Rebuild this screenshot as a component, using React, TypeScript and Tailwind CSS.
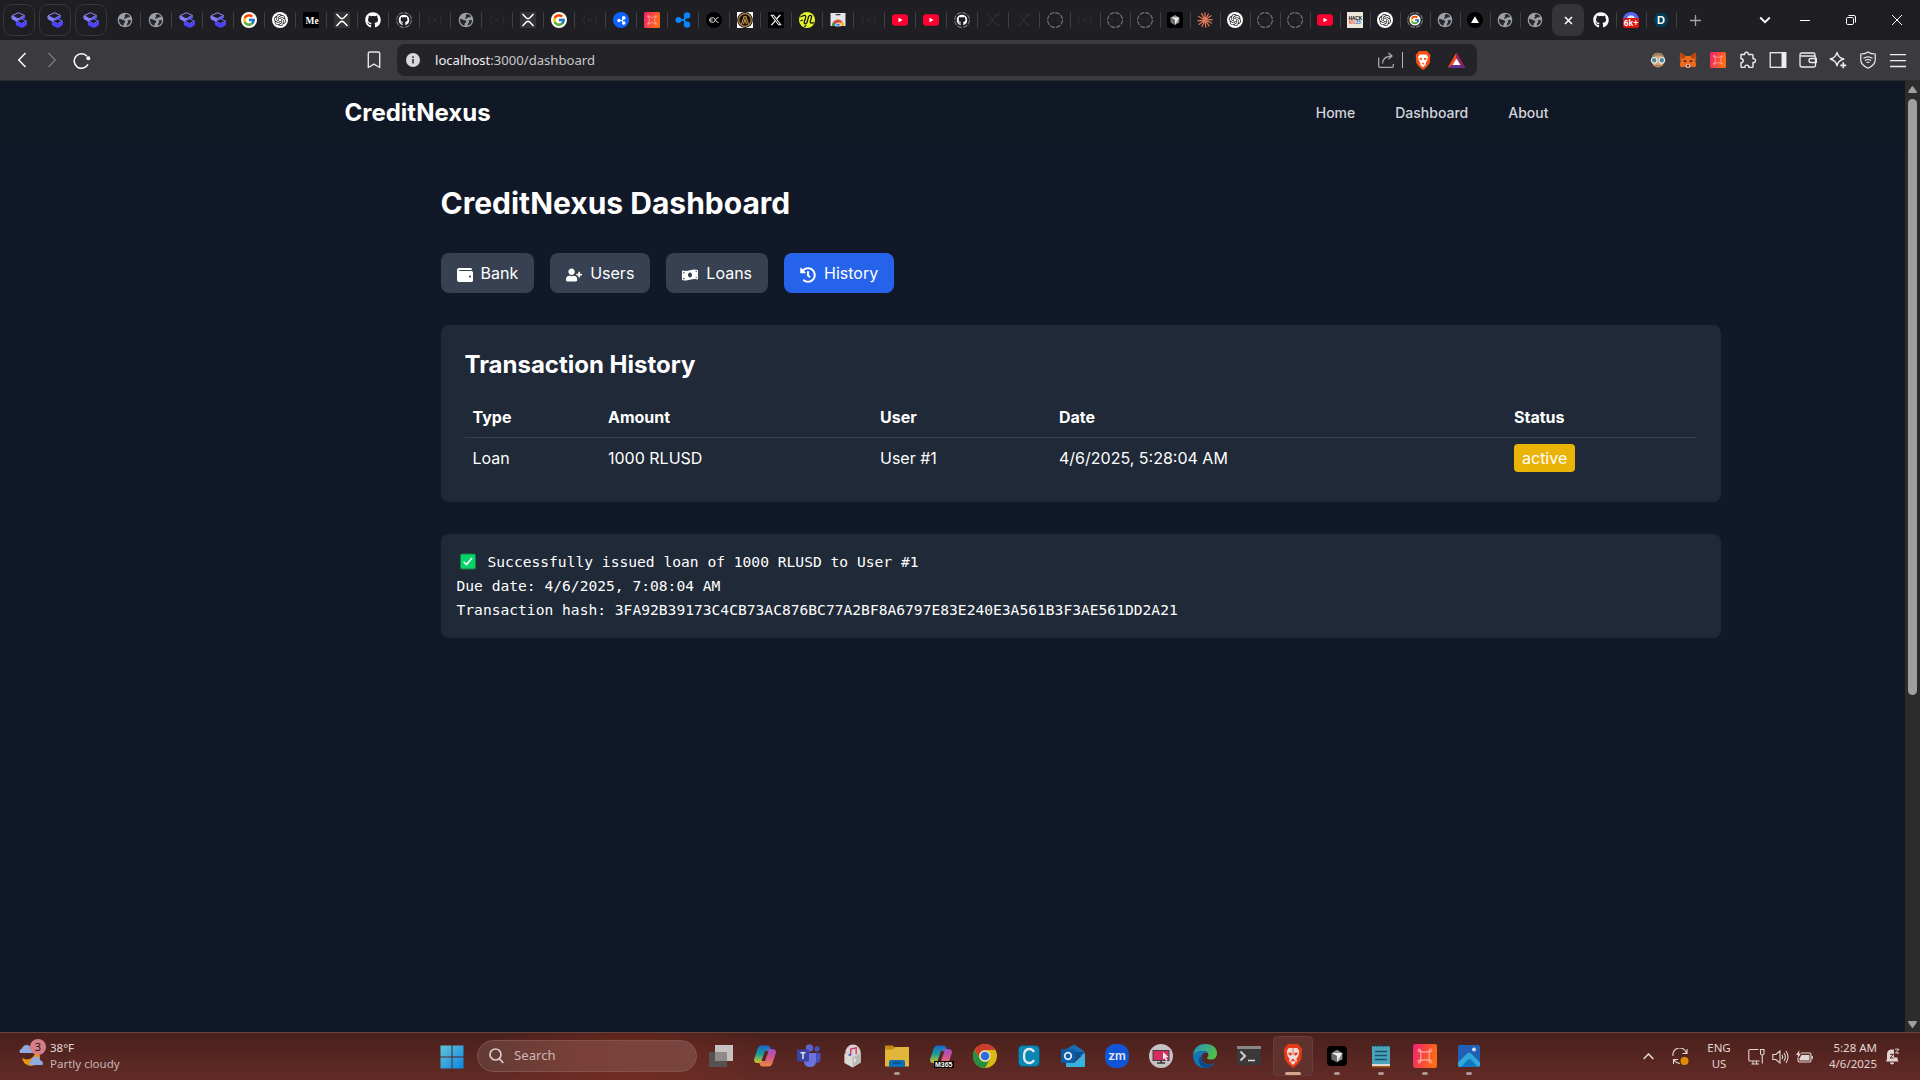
import React from 'react';
import { FcGoogle } from 'react-icons/fc';
import { FaGithub, FaHistory, FaMoneyBillWave, FaUserPlus, FaWallet } from 'react-icons/fa';
import { FaXTwitter } from 'react-icons/fa6';
import { SiOpenai } from 'react-icons/si';

interface Transaction {
  id: number;
  type: string;
  amount: string;
  user: string;
  date: string;
  status: string;
}

type FaviconName =
  | 'layers' | 'globe' | 'google' | 'openai' | 'medium' | 'xrpl' | 'github' | 'githubLoading'
  | 'braces' | 'ripple' | 'drone' | 'rippleMark' | 'evm' | 'ring' | 'twitter' | 'lime' | 'store'
  | 'youtube' | 'ribbon' | 'loading' | 'cursor' | 'claude' | 'hack' | 'googleLoading' | 'vercel'
  | 'discord' | 'devpost';

/* ---------- Tab favicons ---------- */

const Layers = () => (
  <svg width="16" height="16" viewBox="0 0 16 16">
    <path d="M7.500 .7 13.500 3.500 7 6.800 1 3.700Z" fill="#1f1e23" stroke="#8d89ff" strokeWidth="1" strokeLinejoin="round" />
    <path d="M.4 3.800 7 7v3.200L2 8Q.4 7.200.4 5.800Z" fill="#8480f8" />
    <path d="M7 7 14 3.700v2L11 7.200 7 9.800Z" fill="#5d57f5" />
    <path d="m10.500 6.800 5 2.300-5 2.500-5-2.300Z" fill="#1f1e23" stroke="#716cff" strokeWidth="1" strokeLinejoin="round" />
    <path d="m4.800 9.300 5.700 2.500L16 9.200v2.800q0 1.200-1.200 1.800l-2.800 1.700q-1.200.6-2.400 0L6 13.800Q4.800 13 4.800 12Z" fill="#4b43ff" />
  </svg>
);

const Globe = () => (
  <svg width="16" height="16" viewBox="0 0 16 16">
    <circle cx="8" cy="8" r="7.300" fill="#9aa0a6" />
    <g fill="#26262b">
      <path d="M9.200 2Q7 3 8.300 4.700 6.500 5 7.300 6.700 9.500 6.500 10.300 5.200 12.500 5.600 13.200 4.200 11.500 2.200 9.200 2Z" />
      <path d="M1.900 7.200Q4 6.800 5.500 8 8 7.800 8.300 9.800 8 11 6.800 11.200L6.500 13.800Q2 12.500 1.900 7.200Z" />
      <path d="M14 8.200Q11.500 7.500 10.500 8.800 12 10.500 10.300 11 9.800 12 9.800 13.700 14 12.200 14 8.200Z" />
    </g>
  </svg>
);

const GoogleDisc = () => (
  <span className="flex size-4 items-center justify-center rounded-full bg-white">
    <FcGoogle size={14} />
  </span>
);

const OpenAiDisc = () => (
  <span className="flex size-4 items-center justify-center rounded-full bg-white text-[#222]">
    <SiOpenai size={12} />
  </span>
);

const LoadingRing = ({ children }: { children?: React.ReactNode }) => (
  <svg width="16" height="16" viewBox="0 0 16 16">
    <circle cx="8" cy="8" r="7.400" fill="none" stroke="#77777b" strokeWidth="1.100" strokeDasharray="4.650 1.160" />
    {children}
  </svg>
);

const Braces = () => (
  <svg width="16" height="16" viewBox="0 0 16 16" fill="none" stroke="#2c3134" strokeWidth="1">
    <path d="M4 3Q2.300 3 2.300 5t-1.500 3q1.500 1 1.500 3T4 13M12 3q1.700 0 1.700 2t1.500 3q-1.500 1-1.500 3T12 13M5.300 5.500l5 5M10.300 5.500l-5 5" />
  </svg>
);

const RippleShape = ({ fill, size }: { fill: string; size: number }) => (
  <svg width={size} height={size} viewBox="0 0 16 16">
    <path d="M4 8h5l2.500-4M9 8l2.500 4" stroke={fill} strokeWidth="2" fill="none" />
    <circle cx="3.500" cy="8" r="3" fill={fill} />
    <circle cx="12" cy="3.400" r="3.200" fill={fill} />
    <circle cx="12" cy="12.600" r="3.200" fill={fill} />
  </svg>
);

const Drone = ({ size }: { size: number }) => (
  <svg width={size} height={size} viewBox="0 0 16 16">
    <defs>
      <linearGradient id="droneFill" x1="0" y1="0" x2="1" y2="0.300">
        <stop offset="0" stopColor="#ee1f72" />
        <stop offset="1" stopColor="#ff6a14" />
      </linearGradient>
    </defs>
    <rect width="16" height="16" rx="1.500" fill="url(#droneFill)" />
    <path d="M4.600 4.600Q8 6.200 11.400 4.600 9.800 8 11.400 11.400 8 9.800 4.600 11.400 6.200 8 4.600 4.600Z" fill="none" stroke="#ffb3a8" strokeWidth=".7" />
    <g fill="none" stroke="#ffb3a8" strokeWidth=".6">
      <circle cx="4.200" cy="4.200" r=".9" />
      <circle cx="11.800" cy="4.200" r=".9" />
      <circle cx="4.200" cy="11.800" r=".9" />
      <circle cx="11.800" cy="11.800" r=".9" />
    </g>
  </svg>
);

const CursorCube = ({ size }: { size: number }) => (
  <svg width={size} height={size} viewBox="0 0 16 16">
    <rect width="16" height="16" rx="3" fill="#000" />
    <path d="m8 3 4.300 2.500v5L8 13l-4.300-2.500v-5Z" fill="#8c8c8c" />
    <path d="M3.700 5.500h8.600L8 12.800V8Z" fill="#ececec" />
    <path d="M3.700 5.500 8 8v5l-4.300-2.500Z" fill="#6d6d6d" />
  </svg>
);

const Youtube = () => (
  <svg width="16" height="16" viewBox="0 0 16 16">
    <rect y="2.300" width="16" height="11.400" rx="3" fill="#ff0033" />
    <path d="M6.500 5.700v4.600l4-2.300Z" fill="#fff" />
  </svg>
);

const Favicon = ({ name }: { name: FaviconName }) => {
  switch (name) {
    case 'layers':
      return <Layers />;
    case 'globe':
      return <Globe />;
    case 'google':
      return <GoogleDisc />;
    case 'openai':
      return <OpenAiDisc />;
    case 'medium':
      return (
        <svg className="overflow-visible" width="16" height="16" viewBox="0 0 16 16">
          <rect width="16" height="16" rx="2" fill="#000" />
          <text x="2.500" y="11.500" fill="#fff" fontSize="9.500" fontWeight="700" fontFamily="Liberation Serif">
            Me
          </text>
        </svg>
      );
    case 'xrpl':
      return (
        <svg width="16" height="16" viewBox="0 0 16 16">
          <rect width="16" height="16" fill="#333" />
          <path d="M2.500 2 6 5.700q2 1.800 4 0L13.500 2M2.500 14 6 10.300q2-1.800 4 0l3.500 3.700" stroke="#fff" strokeWidth="1.500" fill="none" />
        </svg>
      );
    case 'github':
      return <FaGithub size={16} className="text-white" />;
    case 'githubLoading':
      return (
        <LoadingRing>
          <FaGithub x="2.500" y="2.500" size={11} className="text-white" />
        </LoadingRing>
      );
    case 'googleLoading':
      return (
        <LoadingRing>
          <circle cx="8" cy="8" r="5.600" fill="#fff" />
          <FcGoogle x="3" y="3" size={10} />
        </LoadingRing>
      );
    case 'braces':
      return <Braces />;
    case 'ripple':
      return (
        <span className="flex size-4 items-center justify-center rounded-full bg-[#0f62fe]">
          <RippleShape fill="#fff" size={9} />
        </span>
      );
    case 'rippleMark':
      return <RippleShape fill="#0a84ff" size={16} />;
    case 'drone':
      return <Drone size={16} />;
    case 'evm':
      return (
        <svg width="16" height="16" viewBox="0 0 16 16">
          <circle cx="8" cy="8" r="8" fill="#000" />
          <path d="M7.500 5.800Q3.500 5 3.500 8t4 2.200M3.500 8h3M12.500 5.500Q10.500 5.500 9.300 8 8.500 10.300 7.500 10.200M7.500 5.800Q8.500 5.800 9.300 8q1.200 2.500 3.200 2.500" stroke="#ddd" fill="none" />
        </svg>
      );
    case 'ring':
      return (
        <svg width="16" height="16" viewBox="0 0 16 16">
          <rect width="16" height="16" fill="#fff" />
          <circle cx="8" cy="8" r="7.900" fill="#15110c" />
          <circle cx="8" cy="8" r="6.300" fill="none" stroke="#b98a4a" strokeWidth="1.200" />
          <path d="M4.500 12.500 7 4.500h2l2.500 8M6.500 12l1.500-5 1.500 5" fill="none" stroke="#b98a4a" strokeWidth="1.100" />
        </svg>
      );
    case 'twitter':
      return (
        <svg width="16" height="16" viewBox="0 0 16 16">
          <rect width="16" height="16" fill="#000" />
          <FaXTwitter x="1.500" y="1.500" size={13} className="text-[#e8e8e8]" />
        </svg>
      );
    case 'lime':
      return (
        <svg width="16" height="16" viewBox="0 0 16 16">
          <circle cx="8" cy="8" r="8" fill="#e6f72b" />
          <path d="M1.500 5 5 3.500q2.200-.3 1.700 2L5.300 10q-.4 2 1.200 1.800 1.300-.3 1.700-2L9.500 5q.7-2 2-1.600 1.500.3 1 2L11.300 9.500q-.3 1.700 1 1.600l2.500-.6M1.500 9l2.500-1M5 14.500l2.500-1" stroke="#15160a" strokeWidth="1.300" fill="none" />
        </svg>
      );
    case 'store':
      return (
        <svg width="16" height="16" viewBox="0 0 16 16">
          <path d="M.5 1h15v13h-15Z" fill="#e4e6e8" />
          <rect x="5.500" y="2" width="5" height="1.300" rx=".6" fill="#444" />
          <path d="M2 14a6 6.500 0 0 1 12 0Z" fill="#e0453a" />
          <path d="M2 14q0-2.500 1.300-4.200L6 14Z" fill="#2da350" />
          <path d="M14 14q0-2.500-1-3.800H8.500L11 14Z" fill="#f9c22d" />
          <path d="M5.200 14a2.800 2.800 0 0 1 5.600 0Z" fill="#3f7fec" stroke="#fff" strokeWidth=".7" />
        </svg>
      );
    case 'youtube':
      return <Youtube />;
    case 'ribbon':
      return (
        <svg width="16" height="16" viewBox="0 0 16 16" fill="none" stroke="#273236" strokeWidth="1.200">
          <path d="M1 2q2 0 4 3l5 6q2 2.500 5 2.800M15 1.500q-3 .5-5.500 4L6 10.500Q3.500 14 1 13M10 3.500q2.500-2 4.500-.500" />
        </svg>
      );
    case 'loading':
      return (
        <LoadingRing>
          <path d="M5.500 5.500q-1 1-.5 2.500-.5 1.500.5 2.500M10.500 5.500q1 1 .5 2.500.5 1.500-.5 2.500" stroke="#2a2e33" fill="none" />
        </LoadingRing>
      );
    case 'cursor':
      return <CursorCube size={16} />;
    case 'claude':
      return (
        <svg width="16" height="16" viewBox="0 0 16 16" stroke="#d97757" strokeWidth="1.300" strokeLinecap="round">
          <path d="M8 8V.8M8 8l3.400-6M8 8l6-4.200M8 8l7.200-.3M8 8l6.600 3M8 8l4.200 5.800M8 8l.8 7.200M8 8l-3 6.500M8 8l-5.800 4.300M8 8l-7.200.8M8 8 1.600 4.500M8 8 4.600 1.600" />
        </svg>
      );
    case 'hack':
      return (
        <svg className="overflow-visible" width="16" height="16" viewBox="0 0 16 16" fontFamily="Liberation Sans" fontWeight="700" fontSize="4.600">
          <rect width="16" height="16" fill="#ece8da" />
          <text x="1.700" y="7.500" fill="#000">
            HACK
          </text>
          <text x="2" y="11.800" fill="#e2453c">
            KU
          </text>
          <text x="8.700" y="11.800" fill="#2477c9">
            25
          </text>
        </svg>
      );
    case 'vercel':
      return (
        <svg width="16" height="16" viewBox="0 0 16 16">
          <circle cx="8" cy="8" r="8" fill="#000" />
          <path d="M8 4.200 12 11H4Z" fill="#fff" />
        </svg>
      );
    case 'discord':
      return (
        <svg width="16" height="16" viewBox="0 0 16 16">
          <circle cx="8" cy="8" r="8" fill="#5865f2" />
          <path d="M4 6.500Q4.500 3.800 6.500 3.500h3q2 .3 2.500 3Z" fill="#dfe2ff" />
          <rect y="6" width="16" height="10" rx="2.500" fill="#e0130f" />
          <text x="8" y="14" textAnchor="middle" fill="#fff" fontSize="8.500" fontWeight="700" fontFamily="Liberation Sans" textLength="14.500" lengthAdjust="spacingAndGlyphs">
            6k+
          </text>
        </svg>
      );
    case 'devpost':
      return (
        <svg width="16" height="16" viewBox="0 0 16 16">
          <path d="M4 1h8l4 7-4 7H4L0 8Z" fill="#003e54" />
          <text x="8" y="12" textAnchor="middle" fill="#fff" fontSize="11" fontWeight="700" fontFamily="Liberation Sans">
            D
          </text>
        </svg>
      );
  }
};

const wideTabs: FaviconName[] = [
  'globe', 'globe', 'layers', 'layers', 'google', 'openai', 'medium', 'xrpl', 'github', 'githubLoading',
  'braces', 'globe', 'braces', 'xrpl', 'google', 'braces', 'ripple', 'drone', 'rippleMark', 'evm',
  'ring', 'twitter', 'lime', 'store', 'braces', 'youtube', 'youtube', 'githubLoading', 'ribbon', 'ribbon',
  'loading',
];

const narrowTabs: FaviconName[] = [
  'braces', 'loading', 'loading', 'cursor', 'claude', 'openai', 'loading', 'loading', 'youtube',
  'hack', 'openai', 'googleLoading', 'globe', 'vercel', 'globe', 'globe',
];

const trailingTabs: FaviconName[] = ['github', 'discord', 'devpost'];

const TabDivider = () => <span className="h-4 w-px shrink-0 bg-[#3f3e43]" />;

const TabStrip = () => (
  <div className="flex h-10 shrink-0 items-center bg-[#1f1e23] pl-[3px]">
    <div className="flex gap-1">
      {[0, 1, 2].map((tab) => (
        <div key={tab} className="flex size-8 items-center justify-center rounded-[9px] border border-[#38373c]">
          <Layers />
        </div>
      ))}
    </div>
    <div className="ml-[3px] flex">
      {wideTabs.map((name, index) => (
        <div key={index} className="flex w-[31px] items-center">
          <span className="flex flex-1 justify-center">
            <Favicon name={name} />
          </span>
          <TabDivider />
        </div>
      ))}
      {narrowTabs.map((name, index) => (
        <div key={index} className="flex w-[30px] items-center justify-between pl-1.5">
          <Favicon name={name} />
          {index !== narrowTabs.length - 1 && <TabDivider />}
        </div>
      ))}
    </div>
    {/* Active tab */}
    <div className="ml-px flex size-8 items-center justify-center rounded-lg bg-[#353439]">
      <svg width="9" height="9" viewBox="0 0 9 9" stroke="#fff" strokeWidth="1.500">
        <path d="m1 1 7 7M8 1 1 8" />
      </svg>
    </div>
    <div className="ml-[3px] flex">
      {trailingTabs.map((name) => (
        <div key={name} className="flex w-[30px] items-center justify-between pl-1.5">
          <Favicon name={name} />
          <TabDivider />
        </div>
      ))}
    </div>
    <svg className="ml-[13px]" width="11" height="11" viewBox="0 0 11 11" stroke="#a5a4a8" strokeWidth="1.300">
      <path d="M5.500 0v11M0 5.500h11" />
    </svg>
    <div className="ml-auto flex items-center">
      <svg className="mr-[29px]" width="12" height="8" viewBox="0 0 12 8" stroke="#fff" strokeWidth="1.800" fill="none">
        <path d="m1.200 1.500 4.800 4.700 4.800-4.700" />
      </svg>
      <svg className="mr-9" width="10" height="10" viewBox="0 0 10 10" stroke="#fff">
        <path d="M0 5.500h10" />
      </svg>
      <svg className="mr-9" width="10" height="10" viewBox="0 0 10 10" stroke="#fff" fill="none">
        <rect x=".5" y="2.500" width="7" height="7" rx="1.200" />
        <path d="M2.500.5H8Q9.500.5 9.500 2v5.500" />
      </svg>
      <svg className="mr-[18px]" width="10" height="10" viewBox="0 0 10 10" stroke="#fff">
        <path d="m0 0 10 10M10 0 0 10" />
      </svg>
    </div>
  </div>
);

/* ---------- Address bar ---------- */

const ExtensionIcons = () => (
  <div className="flex items-center gap-3">
    {/* Face with glasses */}
    <svg width="18" height="18" viewBox="0 0 18 18">
      <ellipse cx="9" cy="9.200" rx="6.500" ry="7.300" fill="#d9a577" />
      <path d="M2.500 7Q3.500 1.700 9 1.700T15.500 7q-3-3-6.500-2.500T2.500 7Z" fill="#9a8560" />
      <circle cx="5.200" cy="9.300" r="2.800" fill="#4f8796" stroke="#e4edf0" strokeWidth="1.200" />
      <circle cx="12.800" cy="9.300" r="2.800" fill="#4f8796" stroke="#e4edf0" strokeWidth="1.200" />
      <path d="M6.500 14.500q2.500 1 5 0" stroke="#9e5a40" fill="none" />
    </svg>
    {/* Fox */}
    <svg width="18" height="18" viewBox="0 0 18 18">
      <path d="m1.500 1.500 5 3.500h5l5-3.500.8 5-1 3.500 1 3.500-1.300 3-3.500-1-2 1.500h-3l-2-1.500-3.500 1-1.300-3 1-3.500-1-3.500Z" fill="#ee6a1c" />
      <path d="m1.500 1.500 5 3.500-.8 2.500H1.200ZM16.500 1.500l-5 3.500.8 2.500h4.500Z" fill="#b5440f" />
      <path d="m5 9 2.500 1-.5 1.200-2.300-.6ZM13 9l-2.500 1 .5 1.200 2.300-.6Z" fill="#2a1f1b" />
      <path d="m7 13 2 .6 2-.600.500 2.500-1 1h-3l-1-1Z" fill="#d5bfb2" />
      <path d="M7.800 14h2.400l-.4 1.500H8.200Z" fill="#2a1f1b" />
    </svg>
    <span className="mx-px">
      <Drone size={16} />
    </span>
    {/* Puzzle */}
    <svg width="18" height="18" viewBox="0 0 18 18" stroke="#eeeef0" strokeWidth="1.400" fill="none">
      <path d="M2 3.500h3.700Q5.300 1.300 7.500 1.300T9.400 3.500H13q1 0 1 1v3.200q2.500-.4 2.500 1.800T14 11.400v4q0 1-1 1H9.800q.3-2.300-2-2.300T6 16.400H3q-1 0-1-1v-3.600q2.200-.2 2.200-2T2 7.800Z" strokeLinejoin="round" />
    </svg>
    {/* Side panel */}
    <svg width="18" height="18" viewBox="0 0 18 18">
      <rect x="1.200" y="1.700" width="15.600" height="14.600" fill="none" stroke="#eeeef0" strokeWidth="1.300" />
      <path d="M12.500 1.500h4.500v15h-4.500Z" fill="#eeeef0" />
    </svg>
    {/* Wallet */}
    <svg width="18" height="18" viewBox="0 0 18 18" fill="none" stroke="#eeeef0" strokeWidth="1.300">
      <path d="M16 5V3.500Q16 2 14.500 2H3Q1 2 1 3.800V14q0 2 2 2h12q1.500 0 1.500-1.500V6.600Q16.500 5 15 5H3Q1 5 1 3.800M17.300 7.500H12q-2 0-2 2t2 2h5.300Z" />
    </svg>
    {/* Sparkle */}
    <svg width="18" height="18" viewBox="0 0 18 18" fill="none" stroke="#eeeef0" strokeWidth="1.300">
      <path d="M8 1.300Q9 6.500 14.800 8 9 9.500 8 14.800 7 9.500 1.200 8 7 6.500 8 1.300Z" strokeLinejoin="round" />
      <path d="M14.300 11.300v6M11.300 14.300h6" strokeWidth="1.700" />
    </svg>
    {/* Shield */}
    <svg width="18" height="18" viewBox="0 0 18 18" fill="none" stroke="#eeeef0" strokeWidth="1.200">
      <path d="M9 .9q3 2.100 7.200 2.100V9q0 5-7.200 8.300Q1.800 14 1.800 9V3Q6 3 9 .9Z" />
      <path d="M4.500 7.300q4.500-3 9 0M5.900 9.500q3.100-2 6.200 0M7.500 11.600q1.500-1 3 0" />
    </svg>
    {/* Menu */}
    <svg width="18" height="18" viewBox="0 0 18 18" stroke="#eeeef0" strokeWidth="1.300">
      <path d="M1 3.600h16M1 9.600h16M1 15.500h16" />
    </svg>
  </div>
);

const AddressBar = () => (
  <div className="flex h-[41px] shrink-0 items-center border-b border-[#2c2b2f] bg-[#3b3a3e]">
    <div className="ml-[17px] flex items-center">
      <svg width="10" height="16" viewBox="0 0 10 16" stroke="#fff" strokeWidth="1.500" fill="none">
        <path d="M8.500 1 1.800 8l6.700 7" />
      </svg>
      <svg className="ml-5" width="10" height="16" viewBox="0 0 10 16" stroke="#77767a" strokeWidth="1.500" fill="none">
        <path d="m1.500 1 6.700 7-6.700 7" />
      </svg>
      <svg className="ml-4" width="18" height="17" viewBox="0 0 18 17" fill="none" stroke="#fff" strokeWidth="1.500">
        <path d="M14 4.200A7.300 7.300 0 1 0 15 12.300" />
        <circle cx="15.300" cy="6.300" r="2" fill="#fff" stroke="none" />
      </svg>
    </div>
    <svg className="ml-[276px]" width="14" height="18" viewBox="0 0 14 18" fill="none" stroke="#e6e6e8" strokeWidth="1.400">
      <path d="M1.300 2.500q0-1.500 1.500-1.500h8.400q1.500 0 1.500 1.500v14L7 13.200l-5.700 3.300Z" strokeLinejoin="round" />
    </svg>
    <div className="ml-4 flex h-8 w-[1080px] items-center rounded-lg bg-[#242328] pl-[9px] pr-[11px]">
      <svg width="14" height="14" viewBox="0 0 14 14">
        <circle cx="7" cy="7" r="7" fill="#d9d9dd" />
        <path d="M7 6v4.500M7 3.300V5" stroke="#29282d" strokeWidth="1.500" />
      </svg>
      <span className="ml-[15px] font-['Noto_Sans',sans-serif] text-[13.100px] leading-5 text-[#c9c9cd]">
        <span className="text-[#f0f0f2]">localhost</span>:3000/dashboard
      </span>
      <svg className="mr-px ml-auto" width="16" height="16" viewBox="0 0 16 16" fill="none" stroke="#a7a6ab" strokeWidth="1.300">
        <path d="M.7 5.500V14q0 1.300 1.300 1.300h12q1.300 0 1.300-1.300v-2M4.500 11.500q.3-7 9-7.500M10.500.8 14 4l-3.500 3.300" />
      </svg>
      <span className="ml-[7px] h-4 w-px bg-[#b5b4b9]" />
      <svg className="ml-3" width="16" height="19" viewBox="0 0 24 24" preserveAspectRatio="none">
        <path d="M6 0h12l5 5-1 10-4 5-6 4-6-4-4-5L1 5Z" fill="#fb4f14" />
        <path d="M7 4.500h10l2.500 3-1 4-2.500 3.500.5 2-4.500 3.500L7.500 17l.5-2-2.500-3.500-1-4Z" fill="#fff" />
        <path d="m6.800 8.500 3.700.3-.5 3-3-1ZM17.200 8.500l-3.700.3.500 3 3-1ZM10 16l2-1.500 2 1.500-2 1.500Z" fill="#fb4f14" />
      </svg>
      <svg className="ml-4" width="19" height="17" viewBox="0 0 19 17">
        <path d="M9.500.5.500 16l5-3 4-6.500Z" fill="#ff4724" />
        <path d="m9.500.5 9 15.500-5-3-4-6.500Z" fill="#9e1f63" />
        <path d="M.5 16h18l-5-3h-8Z" fill="#662d91" />
        <path d="m9.500 6.500 4 6.500h-8Z" fill="#fff" />
      </svg>
    </div>
    <div className="ml-auto mr-[13px]">
      <ExtensionIcons />
    </div>
  </div>
);

/* ---------- Page ---------- */

const navLinks = ['Home', 'Dashboard', 'About'];

const Navbar = () => (
  <nav className="bg-[#111825]">
    <div className="mx-auto flex h-16 max-w-7xl items-center justify-between px-8">
      <span className="text-2xl font-bold text-white">CreditNexus</span>
      <div className="flex space-x-4">
        {navLinks.map((link) => (
          <a key={link} href="#" className="px-3 py-2 text-sm font-medium text-[#d1d5db]">
            {link}
          </a>
        ))}
      </div>
    </div>
  </nav>
);

const sections = [
  { label: 'Bank', Icon: FaWallet, active: false },
  { label: 'Users', Icon: FaUserPlus, active: false },
  { label: 'Loans', Icon: FaMoneyBillWave, active: false },
  { label: 'History', Icon: FaHistory, active: true },
];

const transactions: Transaction[] = [
  { id: 1, type: 'Loan', amount: '1000 RLUSD', user: 'User #1', date: '4/6/2025, 5:28:04 AM', status: 'active' },
];

const TransactionHistory = () => (
  <div className="mb-8 rounded-lg bg-[#1f2937] p-6">
    <h2 className="mb-4 text-2xl font-bold">Transaction History</h2>
    <table className="w-full table-fixed border-collapse">
      <thead>
        <tr className="border-b border-[#374151] text-left">
          <th className="w-[135.500px] p-2">Type</th>
          <th className="w-[272px] p-2">Amount</th>
          <th className="w-[179px] p-2">User</th>
          <th className="w-[455px] p-2">Date</th>
          <th className="p-2">Status</th>
        </tr>
      </thead>
      <tbody>
        {transactions.map((tx) => (
          <tr key={tx.id}>
            <td className="p-2">{tx.type}</td>
            <td className="p-2">{tx.amount}</td>
            <td className="p-2">{tx.user}</td>
            <td className="p-2">{tx.date}</td>
            <td className="p-2">
              <span className="rounded bg-[#eab308] px-2 py-1">{tx.status}</span>
            </td>
          </tr>
        ))}
      </tbody>
    </table>
  </div>
);

const CheckMark = () => (
  <svg className="mr-3 mb-1 ml-[3px] inline" width="16" height="17" viewBox="0 0 17 17">
    <rect x=".5" y=".5" width="16" height="16" rx="1.500" fill="#06d36a" stroke="#14803f" />
    <path d="m3.800 8.800 3 3 6-7" fill="none" stroke="#fff" strokeWidth="1.600" />
  </svg>
);

const Dashboard = () => (
  <main className="mx-auto max-w-[1536px] pt-10 pl-64">
    <h1 className="mb-8 text-3xl font-bold">CreditNexus Dashboard</h1>
    <div className="mb-8 flex gap-4">
      {sections.map(({ label, Icon, active }) => (
        <button key={label} className={`rounded-lg px-4 py-2 ${active ? 'bg-[#2563eb]' : 'bg-[#374151]'}`}>
          <Icon className="mr-2 inline" />
          {label}
        </button>
      ))}
    </div>
    <TransactionHistory />
    <pre className="rounded-lg bg-[#1f2937] p-4 font-['DejaVu_Sans_Mono',monospace] text-[14.610px] leading-6">
      <CheckMark />
      {'Successfully issued loan of 1000 RLUSD to User #1\n'}
      {'Due date: 4/6/2025, 7:08:04 AM\n'}
      {'Transaction hash: 3FA92B39173C4CB73AC876BC77A2BF8A6797E83E240E3A561B3F3AE561DD2A21'}
    </pre>
  </main>
);

const Scrollbar = () => (
  <div className="flex w-[15px] shrink-0 flex-col items-center bg-[#2c2c2c]">
    <svg className="mt-[5px]" width="9" height="7" viewBox="0 0 9 7">
      <path d="M4.500 0Q5.200 0 9 6q0 1-1 1H1Q0 7 0 6 3.800 0 4.500 0Z" fill="#9f9f9f" />
    </svg>
    <div className="mt-[6px] h-[596px] w-[9px] rounded-full bg-[#9f9f9f]" />
    <svg className="mt-auto mb-[4px]" width="9" height="7" viewBox="0 0 9 7">
      <path d="M4.500 7Q3.800 7 0 1q0-1 1-1h7q1 0 1 1-3.800 6-4.500 6Z" fill="#9f9f9f" />
    </svg>
  </div>
);

/* ---------- Taskbar ---------- */

const Weather = () => (
  <div className="flex w-[440px] items-center pl-[18px]">
    <svg width="29" height="30" viewBox="0 0 29 30" className="mb-1.5">
      <circle cx="13" cy="18" r="9" fill="#e8940f" />
      <circle cx="9" cy="12" r="8.500" fill="#512420" />
      <path d="M2 14q-1.500-3.500 2-4.500 1.500-4 5-3.500 3 .3 3.500 3.500 3 1 2 4.500Z" fill="#8fabdf" />
      <path d="M12 26q-2-3.500 1.500-5 1.500-4 5-3.500 3 .3 3.500 3.500 4 1.500 2.500 5Z" fill="#8fabdf" />
      <circle cx="20" cy="8" r="8" fill="#d67e87" />
      <text x="20" y="12" textAnchor="middle" fontSize="11" fill="#2a1212" fontFamily="Noto Sans">
        3
      </text>
    </svg>
    <div className="ml-[3px] pb-0.5 text-[11.500px] leading-4">
      <div className="text-[#e5dad9]">38°F</div>
      <div className="text-[#c9b6b4]">Partly cloudy</div>
    </div>
  </div>
);

const Copilot = ({ id }: { id: string }) => (
  <svg width="24" height="24" viewBox="0 0 24 24">
    <defs>
      <linearGradient id={`${id}Left`} x1="0" y1="0" x2="0" y2="1">
        <stop offset="0" stopColor="#1667c9" />
        <stop offset=".5" stopColor="#1c9d9a" />
        <stop offset="1" stopColor="#d8c31c" />
      </linearGradient>
      <linearGradient id={`${id}Right`} x1="0" y1="0" x2="0" y2="1">
        <stop offset="0" stopColor="#9a4fc9" />
        <stop offset=".5" stopColor="#d6558b" />
        <stop offset="1" stopColor="#ef8a3c" />
      </linearGradient>
    </defs>
    <path d="M14.500 1.500q2 0 2.700 2l.8 2.500h-4l-2.500 9q-1 4-4 4H4.500Q1 19 1 15.500L4.500 5Q5.500 1.500 9 1.500Z" fill={`url(#${id}Left)`} />
    <path d="M9.500 22.500q-2 0-2.700-2L6 18h4l2.500-9q1-4 4-4h3q3.500 0 3.500 3.500L19.500 19q-1 3.500-4.500 3.500Z" fill={`url(#${id}Right)`} />
    <path d="M12 7h3.500L12 17H8.500Z" fill="#542522" />
  </svg>
);

const ChromeIcon = () => (
  <svg width="24" height="24" viewBox="0 0 24 24">
    <circle cx="12" cy="12" r="12" fill="#d9b913" />
    <path d="M1.600 6A12 12 0 0 1 22.400 6H12a6 6 0 0 0-5.200 9Z" fill="#cf3a2e" />
    <path d="M1.600 6A12 12 0 0 0 12 24l5.200-9a6 6 0 0 1-10.400 0Z" fill="#258f42" />
    <circle cx="12" cy="12" r="5.600" fill="#e6e6e6" />
    <circle cx="12" cy="12" r="4.300" fill="#2a6fd6" />
  </svg>
);

const BraveIcon = () => (
  <svg width="20" height="24" viewBox="0 0 24 24" preserveAspectRatio="none">
    <path d="M6 0h12l5 5-1 10-4 5-6 4-6-4-4-5L1 5Z" fill="#e63a17" />
    <path d="M7 4h10l2.500 3-1 5-2.500 3 1 2-5 4-5-4 1-2-2.500-3-1-5Z" fill="#ecdedb" />
    <path d="m6.500 8.500 4 .3-.5 3-3-1ZM17.500 8.500l-4 .3.500 3 3-1ZM10 16l2-1.500 2 1.500-2 1.500Z" fill="#e63a17" />
    <path d="M12 4v7M9 19l1-3M15 19l-1-3" stroke="#e63a17" strokeWidth=".8" />
  </svg>
);

interface TaskbarApp {
  name: string;
  state?: 'open' | 'active';
  icon: React.ReactNode;
}

const apps: TaskbarApp[] = [
  {
    name: 'taskview',
    icon: (
      <svg width="24" height="24" viewBox="0 0 24 24">
        <path d="M0 8h18v15H0Z" fill="#565252" />
        <path d="M6 1h18v16H6Z" fill="#c6c2c1" />
        <path d="M6 8h12v9H6Z" fill="#8f8b8a" />
      </svg>
    ),
  },
  { name: 'copilot', icon: <Copilot id="copilot" /> },
  {
    name: 'teams',
    icon: (
      <svg width="24" height="24" viewBox="0 0 24 24">
        <circle cx="12.500" cy="4" r="3.700" fill="#5b62cf" />
        <circle cx="20" cy="5" r="2.700" fill="#4a50bb" />
        <path d="M17 9h6.500v6q0 4-4 4H17Z" fill="#4a50bb" />
        <path d="M7 9h12v8q0 6-6 6t-6-6Z" fill="#6b72dd" />
        <rect y="5.500" width="12" height="12" rx="1" fill="#3b43a5" />
        <path d="M3.500 8.700h5M6 8.500v6.500" stroke="#e3e3f3" strokeWidth="1.500" />
      </svg>
    ),
  },
  {
    name: 'music',
    icon: (
      <svg width="20" height="24" viewBox="0 0 22 24" preserveAspectRatio="none">
        <ellipse cx="11" cy="9" rx="8.500" ry="8.500" fill="#d9d0d3" />
        <path d="M8.500 11V5l6-1.200V10" stroke="#c8385f" strokeWidth="1.500" fill="none" />
        <ellipse cx="7.500" cy="11" rx="1.600" ry="1.300" fill="#4d6fc4" />
        <path d="m1.500 9.500 3 1.500 6 2.500 6-2.800 3-1.700v9.500l-9 5-9-4.500Z" fill="#dbd9d8" />
        <path d="m10.500 13.500 9-4.500v9.500l-9 5Z" fill="#bcb9b8" />
        <path d="M13 14.500v3.500" stroke="#f3f3f3" strokeWidth="1.500" />
      </svg>
    ),
  },
  {
    name: 'explorer',
    state: 'open',
    icon: (
      <svg width="24" height="24" viewBox="0 0 24 24">
        <path d="M0 1.500h8l2 2.500v4H0Z" fill="#c18a0b" />
        <path d="M0 5.500h8L10 3h14v19.500H0Z" fill="#e2b63a" />
        <path d="M4 23v-5q0-2 2-2h12q2 0 2 2v5Z" fill="#0d6db5" />
        <path d="M8 19h8" stroke="#084d83" strokeWidth="1.500" />
      </svg>
    ),
  },
  {
    name: 'm365',
    icon: (
      <span className="relative">
        <Copilot id="m365" />
        <span className="absolute top-[17px] left-[5px] bg-black px-px font-['Liberation_Sans',sans-serif] text-[7px] font-bold leading-[7px] text-white">
          M365
        </span>
      </span>
    ),
  },
  { name: 'chrome', icon: <ChromeIcon /> },
  {
    name: 'clipchamp',
    icon: (
      <svg width="22" height="22" viewBox="0 0 22 22">
        <rect x=".5" y=".5" width="21" height="21" rx="4" fill="#0c86b4" stroke="#1d5266" />
        <path d="M16 7Q14.500 4 11.500 4 6 4 6 11t5.500 7Q14.500 18 16 15" stroke="#dcecf2" strokeWidth="2.300" fill="none" />
      </svg>
    ),
  },
  {
    name: 'outlook',
    icon: (
      <svg width="24" height="24" viewBox="0 0 24 24">
        <path d="m4 6 9-5.500L23 7v5H4Z" fill="#1870b4" />
        <path d="M7 8h16l-8 8H7Z" fill="#0c4f96" />
        <path d="M24 8.500V22q0 1-1 1H5v-4h8Z" fill="#36b2dd" />
        <rect y="5" width="14" height="14" rx="1" fill="#0d5ca8" />
        <circle cx="7" cy="12" r="3.300" fill="none" stroke="#e2ecf5" strokeWidth="1.700" />
      </svg>
    ),
  },
  {
    name: 'zoom',
    icon: (
      <span className="flex size-6 items-center justify-center rounded-[10px] bg-[#1254d6] font-['Inter',sans-serif] text-[12px] font-semibold leading-none text-[#e4e8f4]">
        zm
      </span>
    ),
  },
  {
    name: 'screen',
    icon: (
      <svg width="24" height="24" viewBox="0 0 24 24">
        <circle cx="12" cy="12" r="12" fill="#c6c2c3" />
        <path d="M3.500 6h17v11h-17Z" fill="#4b3a43" />
        <path d="M4.500 7h15v9h-15Z" fill="#d42d60" />
        <path d="M8 19h8M12 17v2" stroke="#3a3336" strokeWidth="1.500" />
        <path d="m14 8 5.500 5-2.500.3 1.500 3-1.500.7-1.400-3L14 15.500Z" fill="#f3e9ec" />
      </svg>
    ),
  },
  {
    name: 'edge',
    icon: (
      <svg width="24" height="24" viewBox="0 0 24 24">
        <defs>
          <linearGradient id="edgeTop" x1="0" y1="0" x2="1" y2=".4">
            <stop offset="0" stopColor="#218ec9" />
            <stop offset="1" stopColor="#4fc04e" />
          </linearGradient>
        </defs>
        <path d="M0 12Q1 0 12.500 0 24 .5 24 10q-.5 5.500-6 5.500-4 0-4-2 1.500-1 1.500-2.500Q15 7 10 7 3 7 0 12Z" fill="url(#edgeTop)" />
        <path d="M0 12q3-5 10-5 3.500 0 5 2-6-1-6.500 4 0 5.500 6 7.500 4 1 7.500-2Q18.500 24 12 24 1 23.500 0 12Z" fill="#1374b8" />
        <path d="M8.500 13q0 5.500 6 7.500 4 1 7.500-2-4 5.500-10 5.500-7-2-6-9 .5-2.500 2.500-2Z" fill="#0d4a8c" />
      </svg>
    ),
  },
  {
    name: 'terminal',
    icon: (
      <svg width="24" height="20" viewBox="0 0 24 20">
        <rect width="24" height="19" rx="1" fill="#3a3838" />
        <path d="M0 0h24v3H0Z" fill="#8b8686" />
        <path d="m3.500 5.500 4.500 4.500-4.500 4.500" stroke="#c9c6c6" strokeWidth="2.200" fill="none" />
        <path d="M11 14.500h7" stroke="#dcdada" strokeWidth="1.500" />
      </svg>
    ),
  },
  { name: 'brave', state: 'active', icon: <BraveIcon /> },
  { name: 'cursor', state: 'open', icon: <CursorCube size={20} /> },
  {
    name: 'notepad',
    state: 'open',
    icon: (
      <svg width="18" height="24" viewBox="0 0 18 24">
        <path d="M0 2h18v18.500H0Z" fill="#4aa3bd" />
        <path d="M0 20h18v2H0Z" fill="#ddd9d5" />
        <path d="M0 22h18v1.500H0Z" fill="#a35b0e" />
        <path d="M2 0v3M5 0v3M8 0v3M11 0v3M14 0v3M17 0v3" stroke="#143f52" strokeWidth="1" />
        <path d="M3 7.500h12M3 11.500h12M3 15.500h12" stroke="#185469" strokeWidth="1.500" />
      </svg>
    ),
  },
  { name: 'drone', state: 'open', icon: <Drone size={24} /> },
  {
    name: 'photos',
    state: 'open',
    icon: (
      <svg width="22" height="22" viewBox="0 0 22 22">
        <rect width="22" height="22" rx="2" fill="#2161b5" />
        <path d="M0 17.500 9 8.500q2-1.500 4 0l9 9V20q0 2-2 2H2q-2 0-2-2Z" fill="#2fa8dc" />
        <path d="m3 22 7-7.500q1.500-1 3 0l7 7.500Z" fill="#1376c2" />
        <circle cx="16" cy="4.500" r="2" fill="#d8dde5" />
      </svg>
    ),
  },
];

const indicator = {
  open: 'h-[3px] w-[6px] rounded-full bg-[#a99593]',
  active: 'h-[3px] w-4 rounded-full bg-[#d9a38c]',
};

const SystemTray = () => (
  <div className="ml-auto flex items-center text-[#e2d5d3]">
    <svg width="11" height="7" viewBox="0 0 11 7" fill="none" stroke="currentColor" strokeWidth="1.600">
      <path d="m.6 6 4.900-5 4.900 5" />
    </svg>
    <svg className="ml-[18px]" width="17" height="17" viewBox="0 0 17 17" fill="none" stroke="currentColor" strokeWidth="1.100">
      <path d="M1 8A6.500 6.500 0 0 1 14.500 5.500M15 1v4.500h-4.500M8 15.500Q4 15 1.500 11.500M1.500 16v-4.500H6" />
      <circle cx="12.500" cy="13" r="4" fill="#e08a08" stroke="none" />
    </svg>
    <div className="ml-[18px] w-6 pb-px text-center text-[11.500px] leading-4">
      <div>ENG</div>
      <div>US</div>
    </div>
    <svg className="ml-[17px]" width="17" height="17" viewBox="0 0 17 17" fill="none" stroke="currentColor" strokeWidth="1.100">
      <path d="M10.500 1.500H2Q.8 1.500.8 2.700v9Q.8 13 2 13h9.500M5 13v3M8.500 13v3M3.500 16h7.500" />
      <path d="M12.500 1.500h3.500V5.500q0 1.500-1.750 1.500T12.500 5.500ZM14.300 7v8.500" />
    </svg>
    <svg className="ml-[7px]" width="17" height="16" viewBox="0 0 17 16" fill="none" stroke="currentColor" strokeWidth="1.100">
      <path d="M.8 5.500h3L8 2v12l-4.200-3.500h-3ZM10 6q1.300 2 0 4M12 4q2.700 4 0 8M14 2q4 6 0 12" />
    </svg>
    <svg className="ml-[7px]" width="17" height="14" viewBox="0 0 17 14" fill="none" stroke="currentColor" strokeWidth="1.100">
      <path d="M5 3h8.500Q15 3 15 4.500v6q0 1.500-1.500 1.500h-10Q2 12 2 10.500V8M16.300 6v3" />
      <path d="M5.500 5h8v5.500h-10V8.500Z" fill="currentColor" stroke="none" />
      <path d="M3.500 0 0 5h2L1.500 8.500 5 3.500H3Z" fill="currentColor" stroke="none" />
    </svg>
    <div className="ml-[15px] w-[49px] whitespace-nowrap pb-0.5 text-right text-[11.500px] leading-4">
      <div>5:28 AM</div>
      <div>4/6/2025</div>
    </div>
    <svg className="ml-2 mr-[20px]" width="15" height="17" viewBox="0 0 15 17" fill="currentColor">
      <path d="M2 11V6.500q0-5 5-5h2v8h3.500V11l1 2.500H1ZM4.800 14.500h4.400q-.4 2-2.200 2t-2.200-2Z" />
      <path d="M10 1.200h4L10.500 5H14" fill="none" stroke="currentColor" />
      <path d="M5 6.300h3.500L5 10h3.500" fill="none" stroke="#55241f" />
    </svg>
  </div>
);

const Taskbar = () => (
  <div className="flex h-12 shrink-0 items-center border-t border-[#684441] bg-[radial-gradient(ellipse_150px_50px_at_630px_50%,rgba(130,48,34,0.6),transparent),linear-gradient(#49201c,#632b26)] font-['Noto_Sans',sans-serif]">
    <Weather />
    <svg width="24" height="24" viewBox="0 0 24 24">
      <defs>
        <linearGradient id="startFill" x1="0" y1="0" x2="1" y2="1">
          <stop offset="0" stopColor="#62c5d6" />
          <stop offset="1" stopColor="#0b85e5" />
        </linearGradient>
      </defs>
      <path d="M.5.5h11v11H.5ZM12.500.5h11v11h-11ZM.5 12.500h11v11H.5ZM12.500 12.500h11v11h-11Z" fill="url(#startFill)" />
    </svg>
    <div className="mb-px ml-[13px] flex h-8 w-[220px] items-center rounded-full border border-[#82534d] bg-linear-to-r from-[#633a35] via-[#7b4138] to-[#7a453f] pl-[11px]">
      <svg width="15" height="16" viewBox="0 0 15 16" fill="none" stroke="#d8cbc9" strokeWidth="1.700">
        <circle cx="6.500" cy="6.500" r="5.500" />
        <path d="m10.300 10.700 4 4.300" />
      </svg>
      <span className="ml-[10px] text-[13.200px] text-[#ccb8b5]">Search</span>
    </div>
    <div className="ml-0.5 flex h-full">
      {apps.map((app) => (
        <div key={app.name} className="flex h-full w-11 items-start justify-center pt-[3px]">
          <div
            className={`flex h-10 w-10 flex-col items-center rounded ${
              app.state === 'active' ? 'border border-[#6a3d39] bg-[#60322d]' : 'border border-transparent'
            }`}
          >
            <span className="flex h-[35px] items-center pt-[3px]">{app.icon}</span>
            {app.state && <span className={indicator[app.state]} />}
          </div>
        </div>
      ))}
    </div>
    <SystemTray />
  </div>
);

export default function App() {
  return (
    <div className="flex h-screen w-full flex-col overflow-hidden bg-[#111827]">
      <TabStrip />
      <AddressBar />
      <div className="flex min-h-0 flex-1">
        <div className="flex-1 font-['Inter',sans-serif] text-white">
          <Navbar />
          <Dashboard />
        </div>
        <Scrollbar />
      </div>
      <Taskbar />
    </div>
  );
}
